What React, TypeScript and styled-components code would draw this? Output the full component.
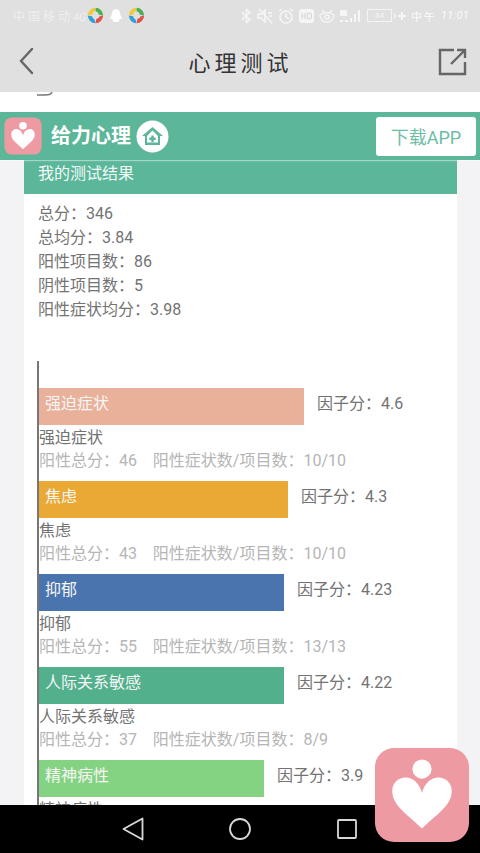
import React from "react";
import styled, { createGlobalStyle } from "styled-components";

const Global = createGlobalStyle`
  html, body { margin: 0; padding: 0; background: #f3f3f6; }
  * { box-sizing: border-box; }
`;

const FONT = `"Roboto", "Noto Sans CJK SC", sans-serif`;

const Page = styled.div`
  position: relative;
  width: 480px;
  height: 853px;
  overflow: hidden;
  display: flex;
  flex-direction: column;
  font-family: ${FONT};
  background: #f3f3f6;
`;
const Header = styled.header`
  flex: none;
  height: 92px;
  background: #e0e0e0;
  display: flex;
  flex-direction: column;
`;
const StatusBar = styled.div`
  height: 32px;
  padding: 0 11px 1px 13px;
  display: flex;
  align-items: center;
  justify-content: space-between;
  color: #f6f6f6;
`;
const StatusGroup = styled.div`
  display: flex;
  align-items: center;
  gap: 5px;
`;
const Carrier = styled.span`
  font-size: 12px;
  letter-spacing: 3px;
  font-weight: 300;
  margin-right: -4px;
  white-space: nowrap;
`;
const CarrierNet = styled.span`
  font-size: 11px;
  letter-spacing: 0;
  font-style: italic;
`;
const Clock = styled.span`
  display: flex;
  align-items: center;
  gap: 4px;
  font-size: 11px;
  letter-spacing: 2px;
  white-space: nowrap;
  color: #fbfbfb;
`;
const ClockTime = styled.span`
  font-size: 11px;
  letter-spacing: 0.3px;
  font-style: italic;
`;
const BatteryBox = styled.span`
  width: 25px;
  height: 13px;
  border: 1px solid #f4f4f4;
  font-size: 8px;
  font-style: italic;
  text-align: center;
  line-height: 11px;
  margin-right: -3px;
`;
const TitleBar = styled.div`
  flex: 1;
  display: flex;
  align-items: center;
  justify-content: space-between;
  padding: 0 13px 3px 18px;
`;
const PageTitle = styled.h1`
  margin: 0 4px 0 0;
  font-size: 22px;
  font-weight: 400;
  letter-spacing: 4px;
  color: #333;
  font-family: "Noto Sans CJK SC", sans-serif;
  line-height: 30px;
`;
const NavIcon = styled.svg`
  display: block;
  width: 30px;
  height: 30px;
  flex: none;
`;
const Scrap = styled.div`
  flex: none;
  height: 20px;
  background: #fff;
  padding-left: 36px;
`;
const ScrapMark = styled.svg`
  display: block;
  width: 20px;
  height: 4px;
`;
const Banner = styled.div`
  flex: none;
  height: 48px;
  background: #5cb699;
  display: flex;
  align-items: center;
  justify-content: space-between;
  padding: 0 4px;
  position: relative;
  z-index: 1;
  box-shadow: 0 1px 1px rgba(255, 255, 255, 0.45);
`;
const Brand = styled.div`
  display: flex;
  align-items: center;
`;
const LogoBox = styled.svg`
  width: 38px;
  height: 38px;
  display: block;
`;
const BrandName = styled.span`
  color: #fff;
  font-size: 20px;
  font-weight: 700;
  margin-left: 9px;
  line-height: 28px;
`;
const HomeBadge = styled.svg`
  width: 33px;
  height: 33px;
  margin-left: 5px;
  display: block;
`;
const DownloadButton = styled.button`
  width: 100px;
  height: 39px;
  background: #fff;
  border: 0;
  border-radius: 3px;
  color: #6dbda3;
  font-family: ${FONT};
  font-size: 18px;
  padding: 0;
`;
const Card = styled.main`
  flex: 1;
  margin: 0 23px 0 24px;
  background: #fff;
  display: flex;
  flex-direction: column;
  overflow: hidden;
`;
const CardHeader = styled.div`
  flex: none;
  height: 34px;
  background: #5cb699;
  color: #f2faf7;
  font-size: 16px;
  line-height: 27px;
  padding-left: 14px;
`;
const Summary = styled.div`
  flex: none;
  padding: 8px 14px 0;
  height: 167px;
`;
const SummaryLine = styled.div`
  font-size: 16px;
  line-height: 24px;
  color: #737373;
`;
const Chart = styled.div`
  flex: none;
  margin-left: 13px;
  border-left: 2px solid #777;
  padding-top: 27px;
  display: flex;
  flex-direction: column;
`;
const Factor = styled.div`
  height: 93px;
  flex: none;
`;
const BarRow = styled.div`
  display: flex;
  align-items: center;
  height: 37px;
`;
const Bar = styled.div<{ $w: number; $c: string }>`
  width: ${(p) => p.$w}px;
  height: 37px;
  background: ${(p) => p.$c};
  color: #f6f6f6;
  font-size: 16px;
  line-height: 31px;
  padding-left: 6px;
`;
const Score = styled.span`
  margin-left: 13px;
  font-size: 16px;
  color: #737373;
  white-space: nowrap;
  margin-top: -9px;
`;
const FactorName = styled.div`
  font-size: 16px;
  line-height: 23px;
  color: #737373;
  margin-top: 1px;
`;
const FactorStats = styled.div`
  font-size: 16px;
  line-height: 23px;
  color: #b5b5b5;
  white-space: pre;
`;
const SystemNav = styled.nav`
  flex: none;
  height: 48px;
  background: #000;
  display: flex;
  align-items: center;
  justify-content: center;
  gap: 81px;
  position: relative;
  z-index: 1;
`;
const SysIcon = styled.svg`
  width: 26px;
  height: 26px;
  display: block;
`;
const FloatingApp = styled.svg`
  position: absolute;
  left: 374px;
  top: 747px;
  width: 96px;
  height: 96px;
  z-index: 2;
`;

const Heart = "M50 85 C38 72 19 62 19 46 C19 36 27 31 35 32 C43 33 48 40 50 48 C52 40 57 33 65 32 C73 31 81 36 81 46 C81 62 62 72 50 85Z";

const Logo = () => (
  <>
    <rect x="1" y="1" width="98" height="98" rx="20" fill="#ee9aa2" />
    <circle cx="50" cy="23" r="10" fill="#fff" />
    <path d={Heart} fill="#fff" />
  </>
);

const GameIcon = () => (
  <svg width="17" height="17" viewBox="0 0 20 20">
    <path d="M10 1a9 9 0 0 1 9 9l-5-1a5 5 0 0 0-4-4z" fill="#4caf50" />
    <path d="M19 10a9 9 0 0 1-9 9l1-5a5 5 0 0 0 4-3z" fill="#e0524a" />
    <path d="M10 19a9 9 0 0 1-9-9l5 1a5 5 0 0 0 3 4z" fill="#2f9fd8" />
    <path d="M1 10a9 9 0 0 1 9-9L9 5a5 5 0 0 0-3 4z" fill="#f0c93c" />
  </svg>
);

const factors = [
  { name: "强迫症状", w: 265, c: "#e9b19a", score: "4.6", stats: "阳性总分：46    阳性症状数/项目数：10/10" },
  { name: "焦虑", w: 249, c: "#eaa935", score: "4.3", stats: "阳性总分：43    阳性症状数/项目数：10/10" },
  { name: "抑郁", w: 245, c: "#4a74ae", score: "4.23", stats: "阳性总分：55    阳性症状数/项目数：13/13" },
  { name: "人际关系敏感", w: 245, c: "#52b08d", score: "4.22", stats: "阳性总分：37    阳性症状数/项目数：8/9" },
  { name: "精神病性", w: 225, c: "#84d382", score: "3.9", stats: "" },
];

const summary = ["总分：346", "总均分：3.84", "阳性项目数：86", "阴性项目数：5", "阳性症状均分：3.98"];

export default function App() {
  return (
    <Page>
      <Global />
      <Header>
        <StatusBar>
          <StatusGroup>
            <Carrier>中国移动<CarrierNet>4G</CarrierNet></Carrier>
            <GameIcon />
            <svg width="14" height="17" viewBox="0 0 16 17">
              <path d="M8 1c3 0 4.500 2.500 4.500 5 0 1.500 2 4 2 6 0 1.500-1 1-2 0-.5 2-1.500 3-1.500 3s1 1 0 1H5c-1 0 0-1 0-1s-1-1-1.500-3c-1 1-2 1.500-2 0 0-2 2-4.500 2-6C3.500 3.500 5 1 8 1z" fill="#fff" />
            </svg>
            <GameIcon />
          </StatusGroup>
          <StatusGroup>
            <svg width="11" height="16" viewBox="0 0 12 16" fill="none" stroke="#f6f6f6" strokeWidth="1.500">
              <path d="M1 4l9 8-4 3V1l4 3-9 8" />
            </svg>
            <svg width="16" height="16" viewBox="0 0 16 16" fill="none" stroke="#f6f6f6" strokeWidth="1.500">
              <path d="M1 6h3l4-4v12l-4-4H1zM2 1l13 14M11 5l4 0M12 8h3" />
            </svg>
            <svg width="16" height="16" viewBox="0 0 16 16" fill="none" stroke="#f6f6f6" strokeWidth="1.500">
              <circle cx="8" cy="9" r="6" /><path d="M8 5v4l3 2M1 3l3-2M15 3l-3-2" />
            </svg>
            <svg width="15" height="14" viewBox="0 0 15 14">
              <rect width="15" height="14" rx="3" fill="#f6f6f6" />
              <path d="M3 4v6M6 4v6M3 7h3M8.500 4v6h1.500q2.500 0 2.500-3t-2.500-3z" stroke="#d8d8d8" fill="none" strokeWidth="1.200" />
            </svg>
            <svg width="16" height="14" viewBox="0 0 16 14" fill="none" stroke="#f6f6f6" strokeWidth="1.500">
              <path d="M1 6q7-5 14 0-1 7-7 7T1 6zM3 1l2 2M13 1l-2 2" /><circle cx="8" cy="8" r="2" />
            </svg>
            <svg width="22" height="16" viewBox="0 0 22 16" fill="#f6f6f6">
              <rect x="0" y="12" width="3" height="2" /><rect x="5" y="12" width="3" height="2" />
              <rect x="10" y="10" width="2" height="4" /><rect x="14" y="6" width="2" height="8" /><rect x="18" y="2" width="2" height="12" />
              <rect x="0" y="2" width="7" height="6" />
            </svg>
            <StatusGroup>
              <BatteryBox>64</BatteryBox>
              <svg width="12" height="10" viewBox="0 0 12 10" fill="#f6f6f6"><path d="M0 3h1.500v4H0zM4 4h3V1h2v3h3v2H9v3H7V6H4z" /></svg>
            </StatusGroup>
            <Clock>中午<ClockTime>11:01</ClockTime></Clock>
          </StatusGroup>
        </StatusBar>
        <TitleBar>
          <NavIcon viewBox="0 0 30 30" fill="none" stroke="#666" strokeWidth="2.400" strokeLinecap="round">
            <path d="M14 3 L3 15 L14 27" />
          </NavIcon>
          <PageTitle>心理测试</PageTitle>
          <NavIcon viewBox="0 0 30 30" fill="none" stroke="#666" strokeWidth="2.400">
            <path d="M17 4H3v24h25V16M14 18L27 5M20 4h8v8" />
          </NavIcon>
        </TitleBar>
      </Header>
      <Scrap>
        <ScrapMark viewBox="0 0 20 4" fill="none" stroke="#777" strokeWidth="1.500">
          <path d="M1 3h8q6 0 7-3" />
        </ScrapMark>
      </Scrap>
      <Banner>
        <Brand>
          <LogoBox viewBox="0 0 100 100"><Logo /></LogoBox>
          <BrandName>给力心理</BrandName>
          <HomeBadge viewBox="0 0 33 33">
            <circle cx="16.500" cy="16.500" r="16" fill="#fff" />
            <path d="M16.500 7 L27 16 H24 V25 H9 V16 H6 Z" fill="#5cb699" />
            <path d="M16.500 10.500 L22 16 V22.500 H11 V16 Z" fill="#fff" />
            <path d="M15.300 15.500h2.400v2h2v2.400h-2v2h-2.400v-2h-2v-2.400h2z" fill="#5cb699" />
          </HomeBadge>
        </Brand>
        <DownloadButton>下载APP</DownloadButton>
      </Banner>
      <Card>
        <CardHeader>我的测试结果</CardHeader>
        <Summary>
          {summary.map((s) => (
            <SummaryLine key={s}>{s}</SummaryLine>
          ))}
        </Summary>
        <Chart>
          {factors.map((f) => (
            <Factor key={f.name}>
              <BarRow>
                <Bar $w={f.w} $c={f.c}>{f.name}</Bar>
                <Score>因子分：{f.score}</Score>
              </BarRow>
              <FactorName>{f.name}</FactorName>
              <FactorStats>{f.stats}</FactorStats>
            </Factor>
          ))}
        </Chart>
      </Card>
      <SystemNav>
        <SysIcon viewBox="0 0 26 26" fill="none" stroke="#d8d8d8" strokeWidth="1.800" strokeLinejoin="round">
          <path d="M22.500 2.500 V23.500 L3.500 13 Z" />
        </SysIcon>
        <SysIcon viewBox="0 0 26 26" fill="none" stroke="#d8d8d8" strokeWidth="1.800">
          <circle cx="13" cy="13" r="10" />
        </SysIcon>
        <SysIcon viewBox="0 0 26 26" fill="none" stroke="#d8d8d8" strokeWidth="1.800">
          <rect x="4" y="4" width="18" height="18" rx="1" />
        </SysIcon>
      </SystemNav>
      <FloatingApp viewBox="0 0 100 100"><Logo /></FloatingApp>
    </Page>
  );
}
